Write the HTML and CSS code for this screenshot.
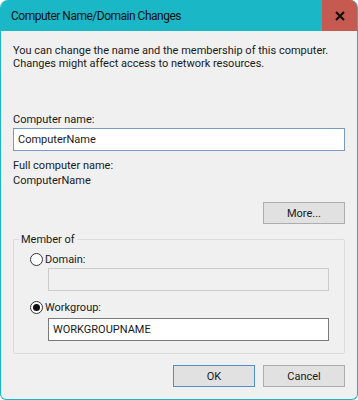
FILE: index.html
```html
<!DOCTYPE html>
<html lang="en">
<head>
    <meta charset="UTF-8">
    <title>Computer Name/Domain Changes</title>
    <link rel="stylesheet" href="styles.css">
</head>
<body>
    <div class="window">
        <div class="titlebar">
            <div class="title">Computer Name/Domain Changes</div>
            <div class="close">
                <svg width="10" height="10" viewBox="0 0 10 10">
                    <path d="M1 1 L9 9 M9 1 L1 9" stroke="#111" stroke-width="2.2"/>
                </svg>
            </div>
        </div>

        <div class="content">
            <p class="intro">
                You can change the name and the membership of this computer.<br>
                Changes might affect access to network resources.
            </p>

            <div class="label name-label">Computer name:</div>
            <div class="textbox focused">ComputerName</div>

            <div class="label full-name">Full computer name:</div>
            <div class="label">ComputerName</div>

            <div class="more-row">
                <div class="button">More...</div>
            </div>

            <div class="groupbox">
                <div class="legend">Member of</div>
                <div class="radio-row">
                    <span class="radio"></span>
                    <span>Domain:</span>
                </div>
                <div class="textbox disabled"></div>
                <div class="radio-row workgroup">
                    <span class="radio checked"></span>
                    <span>Workgroup:</span>
                </div>
                <div class="textbox plain">WORKGROUPNAME</div>
            </div>

            <div class="buttons">
                <div class="button default">OK</div>
                <div class="button">Cancel</div>
            </div>
        </div>
    </div>
</body>
</html>
```

FILE: styles.css
```css
* {
    margin: 0;
    padding: 0;
    box-sizing: border-box;
}

body {
    font-family: Roboto, "Liberation Sans", sans-serif;
    font-size: 11px;
    color: #1a1a1a;
    background: #ffffff;
}

.window {
    width: 358px;
    height: 400px;
    background: #f0f0f0;
    border: 1px solid #1ab8c6;
    border-top: none;
    border-radius: 8px 8px 6px 6px;
    overflow: hidden;
    display: flex;
    flex-direction: column;
}

.titlebar {
    height: 31px;
    background: #1ab8c6;
    display: flex;
    align-items: center;
    justify-content: space-between;
    flex-shrink: 0;
}

.title {
    font-size: 12px;
    letter-spacing: -0.5px;
    padding-left: 10px;
    color: #111;
}

.close {
    width: 35px;
    height: 31px;
    background: #c75a50;
    display: flex;
    align-items: center;
    justify-content: center;
}

.content {
    padding: 13px 12px 0 12px;
    display: flex;
    flex-direction: column;
}

.intro {
    line-height: 13px;
    white-space: nowrap;
}

.label {
    line-height: 15px;
}

.name-label {
    margin-top: 42px;
}

.textbox {
    height: 23px;
    border: 1px solid #adadad;
    background: #ffffff;
    padding: 0 4px;
    line-height: 21px;
}

.textbox.focused {
    margin-top: 1px;
    border-color: #7a9bbf;
}

.full-name {
    margin-top: 7px;
}

.more-row {
    display: flex;
    justify-content: flex-end;
    margin-top: 14px;
}

.button {
    width: 82px;
    height: 22px;
    background: #e1e1e1;
    border: 1px solid #adadad;
    display: flex;
    align-items: center;
    justify-content: center;
}

.button.default {
    border-color: #4f8fd0;
}

.groupbox {
    position: relative;
    margin-top: 15px;
    height: 115px;
    border: 1px solid #dcdcdc;
    border-radius: 2px;
    padding: 11px 15px 0 16px;
}

.legend {
    position: absolute;
    top: -8px;
    left: 5px;
    padding: 0 2px;
    background: #f0f0f0;
    line-height: 15px;
}

.radio-row {
    display: flex;
    align-items: center;
    gap: 2px;
    height: 16px;
}

.radio {
    width: 13px;
    height: 13px;
    border: 1px solid #333;
    border-radius: 50%;
    background: #ffffff;
    display: flex;
    align-items: center;
    justify-content: center;
}

.radio.checked::after {
    content: "";
    width: 7px;
    height: 7px;
    border-radius: 50%;
    background: #111;
}

.textbox.disabled {
    margin: 1px 0 0 18px;
    background: #f0f0f0;
    border-color: #cccccc;
}

.radio-row.workgroup {
    margin-top: 8px;
}

.textbox.plain {
    margin: 3px 0 0 18px;
    border-color: #7a7a7a;
}

.buttons {
    display: flex;
    justify-content: flex-end;
    gap: 8px;
    margin-top: 11px;
}
```
